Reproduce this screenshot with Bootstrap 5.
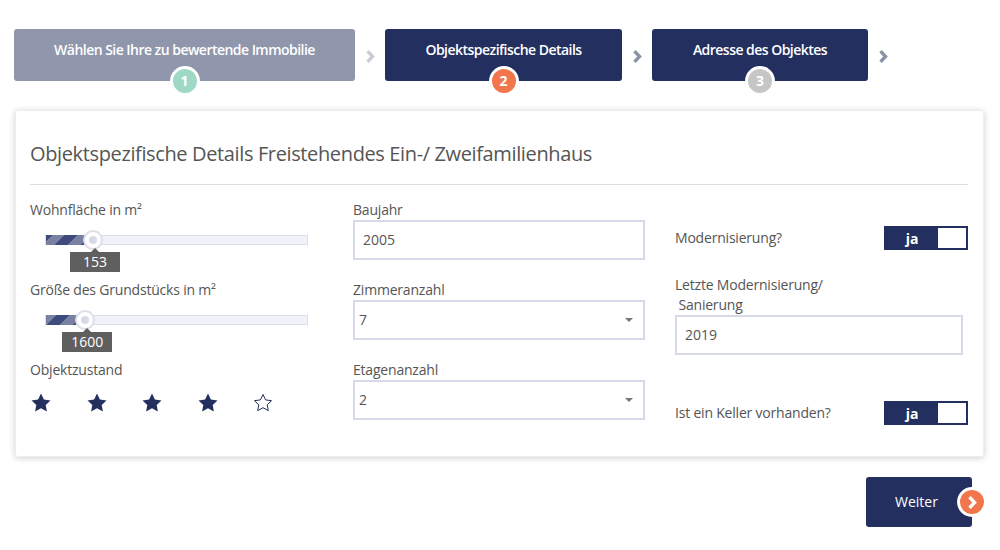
<!DOCTYPE html>
<html lang="de">
<head>
    <meta charset="UTF-8">
    <meta name="viewport" content="width=device-width, initial-scale=1.0">
    <title>Objektspezifische Details</title>
    <link href="https://cdn.jsdelivr.net/npm/bootstrap@5.3.0/dist/css/bootstrap.min.css" rel="stylesheet">
    <style>
        body {
            font-family: "Open Sans", sans-serif;
            font-size: 14px;
            letter-spacing: -.2px;
            color: #555;
            background: #fff;
        }

        .page-wrap {
            padding: 29px 16px 0 14px;
        }

        /* steps on top */
        .step-box {
            position: relative;
            height: 52px;
            padding-top: 10px;
            background: #232f5f;
            border-radius: 3px;
            color: #fff;
            font-size: 14px;
            font-weight: 600;
            letter-spacing: -.53px;
            text-align: center;
        }
        .step-one { width: 341px; background: #9097ad; }
        .step-two { width: 237px; }
        .step-three { width: 216px; }
        .step-arrow { width: 30px; padding-top: 15px; text-align: center; }
        .step-num {
            position: absolute;
            left: 50%;
            top: 37px;
            width: 30px;
            height: 30px;
            margin-left: -15px;
            border: 3px solid #fff;
            border-radius: 50%;
            font-size: 14px;
            font-weight: 700;
            line-height: 24px;
            letter-spacing: 0;
        }
        .num-green { background: #9fd9c5; }
        .num-orange { background: #f1764c; }
        .num-grey { background: #c6c6c6; }

        /* main card */
        .detail-card {
            margin: 29px 0 0 1px;
            width: 969px;
            height: 347px;
            padding: 29px 15px 0 14px;
            background: #fff;
            border: 1px solid #eee;
            border-radius: 3px;
            box-shadow: 0 1px 6px rgba(0, 0, 0, .2);
        }
        .detail-title {
            margin: 0;
            padding-bottom: 17px;
            border-bottom: 1px solid #ddd;
            font-size: 20px;
            font-weight: 400;
            line-height: 27px;
            letter-spacing: -.37px;
            color: #555;
        }
        .col-left { width: 323px; }
        .col-mid { width: 322px; }
        .col-right { width: 293px; }
        .field-label { display: block; line-height: 18px; margin: 0; }

        /* range sliders */
        .range-track {
            position: relative;
            height: 10px;
            width: 263px;
            margin: 16px 0 36px 15px;
            background: #f1f1fa;
            border: 1px solid #dcdeea;
        }
        .range-fill {
            height: 10px;
            margin-top: -1px;
            background: repeating-linear-gradient(-45deg, #3f4b7c 0 9px, #7a82a4 9px 18px);
        }
        .range-knob {
            position: absolute;
            top: -6px;
            width: 20px;
            height: 20px;
            margin-left: -10px;
            background: #fff;
            border: 2px solid #dcdeea;
            border-radius: 50%;
        }
        .range-knob::after {
            content: "";
            position: absolute;
            left: 4px;
            top: 4px;
            width: 8px;
            height: 8px;
            background: #d5d9e8;
            border-radius: 50%;
        }
        .range-tip {
            position: absolute;
            top: 16px;
            width: 50px;
            height: 20px;
            margin-left: -23px;
            background: #5f5f5f;
            color: #fff;
            font-size: 14px;
            line-height: 20px;
            letter-spacing: 0;
            text-align: center;
        }
        .range-tip::before {
            content: "";
            position: absolute;
            left: 21px;
            top: -4px;
            border: 4px solid transparent;
            border-top: 0;
            border-bottom-color: #5f5f5f;
        }
        .star-row { width: 242px; margin: 14px 0 0 1px; }

        /* inputs */
        .field-input, .field-select {
            display: block;
            height: 40px;
            border: 2px solid #d5d9e8;
            border-radius: 0;
            font-size: 14px;
            color: #555;
            box-shadow: none;
        }
        .field-input { padding: 0 8px 2px; }
        .field-select {
            padding: 0 4px 2px;
            background-image: url("data:image/svg+xml,%3Csvg xmlns='http://www.w3.org/2000/svg' width='8' height='4'%3E%3Cpath d='M0 0h8L4 4z' fill='%23777'/%3E%3C/svg%3E");
            background-size: 8px 4px;
            background-position: right 10px center;
        }
        .mid-width { width: 292px; margin: 1px 0 21px; }
        .right-width { width: 288px; }

        /* ja toggle */
        .ja-toggle {
            width: 84px;
            height: 24px;
            padding: 2px;
            background: #232f5f;
            color: #fff;
            font-size: 14px;
            font-weight: 700;
            line-height: 22px;
        }
        .ja-toggle span { width: 52px; padding: 0; text-align: center; }
        .ja-toggle i { display: block; width: 28px; background: #fff; }
        .row-text { padding-bottom: 2px; }
        .top-toggle { margin-top: 25px; }
        .mod-label { margin-top: 25px; line-height: 20px; }
        .cellar-row { margin-top: 46px; }

        /* button */
        .next-row { margin: 20px 12px 0 0; }
        .next-btn {
            position: relative;
            width: 106px;
            height: 50px;
            padding: 0 5px 2px 0;
            background: #232f5f;
            border: 0;
            border-radius: 3px;
            color: #fff;
            font-size: 14px;
        }
        .next-dot {
            position: absolute;
            top: 10px;
            left: 91px;
            width: 30px;
            height: 30px;
            border: 3px solid #fff;
            border-radius: 50%;
            background: #f1764c;
        }
    </style>
</head>
<body>
    <div class="page-wrap">
        <div class="d-flex">
            <div class="step-box step-one">Wählen Sie Ihre zu bewertende Immobilie<div class="step-num num-green">1</div></div>
            <div class="step-arrow"><svg width="9" height="13" viewBox="0 0 9 13"><path d="M1.5 1.2l5 5.3-5 5.3" fill="none" stroke="#c9ccd2" stroke-width="3.4"/></svg></div>
            <div class="step-box step-two">Objektspezifische Details<div class="step-num num-orange">2</div></div>
            <div class="step-arrow"><svg width="9" height="13" viewBox="0 0 9 13"><path d="M1.5 1.2l5 5.3-5 5.3" fill="none" stroke="#8a92a6" stroke-width="3.4"/></svg></div>
            <div class="step-box step-three">Adresse des Objektes<div class="step-num num-grey">3</div></div>
            <div class="step-arrow"><svg width="9" height="13" viewBox="0 0 9 13"><path d="M1.5 1.2l5 5.3-5 5.3" fill="none" stroke="#8a92a6" stroke-width="3.4"/></svg></div>
        </div>

        <div class="detail-card">
            <h1 class="detail-title">Objektspezifische Details Freistehendes Ein-/ Zweifamilienhaus</h1>
            <div class="d-flex pt-3">
                <div class="col-left">
                    <label class="field-label">Wohnfläche in m²</label>
                    <div class="range-track">
                        <div class="range-fill" style="width: 18%"></div>
                        <div class="range-knob" style="left: 18%"></div>
                        <div class="range-tip" style="left: 18%">153</div>
                    </div>
                    <label class="field-label">Größe des Grundstücks in m²</label>
                    <div class="range-track">
                        <div class="range-fill" style="width: 15%"></div>
                        <div class="range-knob" style="left: 15%"></div>
                        <div class="range-tip" style="left: 15%">1600</div>
                    </div>
                    <label class="field-label">Objektzustand</label>
                    <div class="star-row d-flex justify-content-between">
                        <svg width="20" height="19" viewBox="0 0 20 19"><path d="M10 .5l2.9 6 6.6.9-4.8 4.6 1.2 6.5-5.9-3.2-5.9 3.2 1.2-6.5L.5 7.4l6.6-.9z" fill="#232f5f"/></svg>
                        <svg width="20" height="19" viewBox="0 0 20 19"><path d="M10 .5l2.9 6 6.6.9-4.8 4.6 1.2 6.5-5.9-3.2-5.9 3.2 1.2-6.5L.5 7.4l6.6-.9z" fill="#232f5f"/></svg>
                        <svg width="20" height="19" viewBox="0 0 20 19"><path d="M10 .5l2.9 6 6.6.9-4.8 4.6 1.2 6.5-5.9-3.2-5.9 3.2 1.2-6.5L.5 7.4l6.6-.9z" fill="#232f5f"/></svg>
                        <svg width="20" height="19" viewBox="0 0 20 19"><path d="M10 .5l2.9 6 6.6.9-4.8 4.6 1.2 6.5-5.9-3.2-5.9 3.2 1.2-6.5L.5 7.4l6.6-.9z" fill="#232f5f"/></svg>
                        <svg width="20" height="19" viewBox="0 0 20 19"><path d="M10 1.5l2.6 5.4 5.9.8-4.3 4.1 1.1 5.8-5.3-2.9-5.3 2.9 1.1-5.8-4.3-4.1 5.9-.8z" fill="#fff" stroke="#232f5f"/></svg>
                    </div>
                </div>
                <div class="col-mid">
                    <label class="field-label">Baujahr</label>
                    <input class="form-control field-input mid-width" value="2005">
                    <label class="field-label">Zimmeranzahl</label>
                    <select class="form-select field-select mid-width"><option>7</option></select>
                    <label class="field-label">Etagenanzahl</label>
                    <select class="form-select field-select mid-width"><option>2</option></select>
                </div>
                <div class="col-right">
                    <div class="top-toggle d-flex justify-content-between align-items-center">
                        <span class="row-text">Modernisierung?</span>
                        <div class="ja-toggle d-flex"><span>ja</span><i></i></div>
                    </div>
                    <label class="field-label mod-label">Letzte Modernisierung/<br>&nbsp;Sanierung</label>
                    <input class="form-control field-input right-width" value="2019">
                    <div class="cellar-row d-flex justify-content-between align-items-center">
                        <span class="row-text">Ist ein Keller vorhanden?</span>
                        <div class="ja-toggle d-flex"><span>ja</span><i></i></div>
                    </div>
                </div>
            </div>
        </div>

        <div class="next-row d-flex justify-content-end">
            <button class="next-btn" type="button">Weiter
                <span class="next-dot d-flex align-items-center justify-content-center"><svg width="9" height="13" viewBox="0 0 9 13"><path d="M1.5 1.2l5 5.3-5 5.3" fill="none" stroke="#fff" stroke-width="3.4"/></svg></span>
            </button>
        </div>
    </div>
    <script src="https://cdn.jsdelivr.net/npm/bootstrap@5.3.0/dist/js/bootstrap.bundle.min.js"></script>
</body>
</html>
